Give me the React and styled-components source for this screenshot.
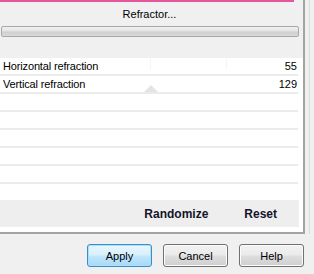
import React from "react";
import styled, { createGlobalStyle } from "styled-components";

const Global = createGlobalStyle`
    html, body {
        margin: 0;
        padding: 0;
        background: #f0f0f0;
    }
    body {
        font-family: "Liberation Sans", Arial, sans-serif;
        font-size: 11px;
        color: #000;
    }
`;

const Page = styled.div`
    width: 314px;
    height: 274px;
    overflow: hidden;
    background: #f0f0f0;
    display: flex;
    flex-direction: column;
`;

const Top = styled.div`
    display: flex;
    height: 234px;
`;

const Panel = styled.div`
    width: 303px;
    border-right: 2px solid #a3a3a3;
    border-bottom: 2px solid #a3a3a3;
    display: flex;
    flex-direction: column;
    background: #f0f0f0;
`;

const Strip = styled.div`
    flex: 1;
    display: flex;
    padding-left: 4px;

    &::before {
        content: "";
        width: 1px;
        background: #dcdcdc;
    }
`;

const PinkBar = styled.div`
    width: 294px;
    height: 2px;
    background: #e2589a;
`;

const Title = styled.div`
    width: 299px;
    height: 24px;
    display: flex;
    align-items: center;
    justify-content: center;
    font-size: 11px;
    padding-bottom: 1px;
    box-sizing: border-box;
`;

const Progress = styled.div`
    margin-left: 1px;
    width: 298px;
    height: 11px;
    box-sizing: border-box;
    border: 1px solid #a8a8a8;
    border-radius: 2px;
    background: linear-gradient(#f2f2f2, #e4e4e4 45%, #cfcfcf 55%, #dadada);
`;

const Gap = styled.div`
    height: 21px;
`;

const Lower = styled.div`
    flex: 1;
    background: #fff;
    display: flex;
    flex-direction: column;
`;

const Table = styled.div`
    width: 298px;
    height: 142px;
    display: flex;
    flex-direction: column;
`;

const Row = styled.div`
    position: relative;
    height: 16px;
    flex: none;
    display: flex;
    align-items: center;
    justify-content: space-between;
    padding: 0 1px 0 3px;
    border-bottom: 2px solid #ebebeb;
`;

const Label = styled.span`
    letter-spacing: -0.15px;
`;

const Value = styled.span``;

const Tick = styled.div`
    position: absolute;
    top: 0;
    left: ${p => p.$x}px;
    width: 1px;
    height: 12px;
    background: #f5f5f5;
`;

const Marker = styled.svg`
    position: absolute;
    left: 144px;
    bottom: 0;
`;

const Footer = styled.div`
    width: 299px;
    height: 27px;
    background: #eeeeee;
    display: flex;
    align-items: center;
    justify-content: flex-end;
    gap: 36px;
    padding-right: 22px;
    box-sizing: border-box;
`;

const LinkButton = styled.span`
    font-size: 12px;
    font-weight: bold;
    color: #14142a;
`;

const Buttons = styled.div`
    flex: 1;
    display: flex;
    justify-content: flex-end;
    align-items: flex-start;
    gap: 11px;
    padding: 10px 10px 0 0;
`;

const Button = styled.button`
    width: 65px;
    height: 23px;
    box-sizing: border-box;
    font-family: "Liberation Sans", Arial, sans-serif;
    font-size: 11px;
    color: #000;
    border-radius: 3px;
    border: 1px solid ${p => (p.$primary ? "#3c8dc8" : "#707070")};
    background: ${p =>
        p.$primary
            ? "linear-gradient(#eaf6fd, #d9f0fc 45%, #bee6fd 55%, #a7d9f5)"
            : "linear-gradient(#f2f2f2, #ebebeb 45%, #dddddd 55%, #cfcfcf)"};
    box-shadow: inset 0 0 0 1px ${p => (p.$primary ? "#a8e0fb" : "#fcfcfc")};
    padding: 0;
    padding-top: 1px;
`;

const rows = [
    { label: "Horizontal refraction", value: 55 },
    { label: "Vertical refraction", value: 129 },
    {}, {}, {}, {}, {},
];

export default function App() {
    return <Page>
        <Global />
        <Top>
            <Panel>
                <PinkBar />
                <Title>Refractor...</Title>
                <Progress />
                <Gap />
                <Lower>
                    <Table>
                        {rows.map((r, i) => (
                            <Row key={i}>
                                {i === 0 && <><Tick $x={150} /><Tick $x={226} /></>}
                                {i === 1 && <Marker width="14" height="7" viewBox="0 0 14 7">
                                    <path d="M0 7 L7 0 L14 7 Z" fill="#e4e4e4" />
                                </Marker>}
                                <Label>{r.label}</Label>
                                <Value>{r.value}</Value>
                            </Row>
                        ))}
                    </Table>
                    <Footer>
                        <LinkButton>Randomize</LinkButton>
                        <LinkButton>Reset</LinkButton>
                    </Footer>
                </Lower>
            </Panel>
            <Strip />
        </Top>
        <Buttons>
            <Button $primary>Apply</Button>
            <Button>Cancel</Button>
            <Button>Help</Button>
        </Buttons>
    </Page>;
}
